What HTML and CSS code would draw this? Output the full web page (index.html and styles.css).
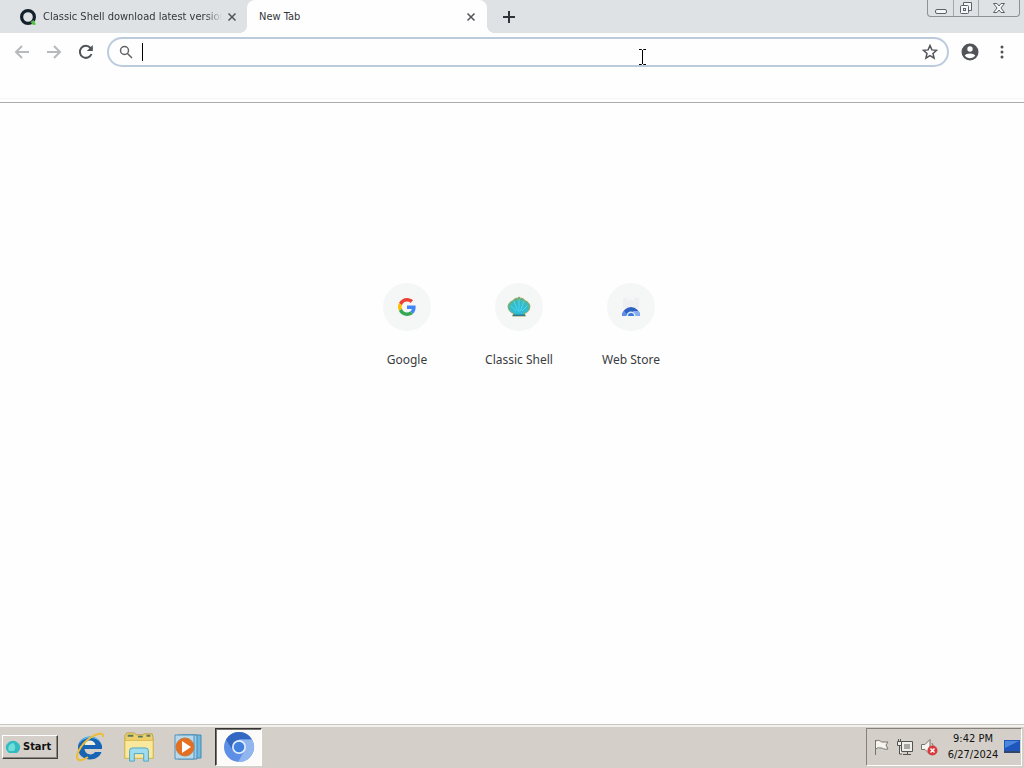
FILE: index.html
```html
<!DOCTYPE html>
<html lang="en">
<head>
<meta charset="utf-8">
<title>New Tab</title>
<link rel="stylesheet" href="styles.css">
</head>
<body>
<header class="tabstrip">
  <div class="tab">
    <svg class="favicon" viewBox="0 0 18 18"><circle cx="9" cy="9" r="6.4" fill="none" stroke="#14202b" stroke-width="3.2"/><path d="M11.5 14l3-2 2.5 4.500-3 .5z" fill="#54c242"/></svg>
    <span class="tab-title faded">Classic Shell download latest version</span>
    <button class="icon-btn close" aria-label="Close tab"><svg viewBox="0 0 10 10"><path d="M1.500 1.500l7 7M8.500 1.500l-7 7"/></svg></button>
  </div>
  <div class="tab active">
    <span class="tab-title">New Tab</span>
    <button class="icon-btn close" aria-label="Close tab"><svg viewBox="0 0 10 10"><path d="M1.500 1.500l7 7M8.500 1.500l-7 7"/></svg></button>
  </div>
  <button class="icon-btn new-tab" aria-label="New tab"><svg viewBox="0 0 12 12"><path d="M6 0v12M0 6h12"/></svg></button>
  <div class="window-controls">
    <button class="icon-btn win" aria-label="Minimize"><svg viewBox="0 0 14 14"><rect x="1.500" y="8.500" width="11" height="4" rx="1.500"/></svg></button>
    <button class="icon-btn win" aria-label="Restore"><svg viewBox="0 0 14 14"><path d="M4.500 4V1.500h8v8H10"/><rect x="1.500" y="4.500" width="8" height="8" rx="1"/><rect x="4.500" y="7.500" width="2" height="2"/></svg></button>
    <button class="icon-btn win win-close" aria-label="Close"><svg viewBox="0 0 14 14"><path d="M1.500 2.500h3.500l2 2.500 2-2.500h3.500L9 7l3.500 4.500H9L7 9l-2 2.500H1.500L5 7z"/></svg></button>
  </div>
</header>
<nav class="toolbar">
  <button class="icon-btn nav muted" aria-label="Back"><svg viewBox="0 0 16 16"><path d="M15 8H2M8 2L2 8l6 6"/></svg></button>
  <button class="icon-btn nav muted" aria-label="Forward"><svg viewBox="0 0 16 16"><path d="M1 8h13M8 2l6 6-6 6"/></svg></button>
  <button class="icon-btn nav" aria-label="Reload"><svg viewBox="0 0 16 16"><path d="M13.500 10A6 6 0 1 1 12.500 4L14 5.500"/><path d="M14.800 1v6H8.800z" fill="#505357" stroke="none"/></svg></button>
  <div class="omnibox">
    <svg class="search" viewBox="0 0 14 14"><circle cx="5.500" cy="5.500" r="4"/><path d="M8.500 8.500L13 13"/></svg>
    <span class="caret"></span>
    <input class="address" type="text" aria-label="Address and search bar">
    <button class="icon-btn star" aria-label="Bookmark this page"><svg viewBox="0 0 16 16"><path d="M8 1.500l1.900 4.400 4.700.4-3.600 3.100 1.100 4.700L8 11.600l-4.100 2.500L5 9.400 1.400 6.300l4.700-.4z"/></svg></button>
  </div>
  <button class="icon-btn profile" aria-label="Profile"><svg viewBox="0 0 18 18"><circle cx="9" cy="9" r="8.500" fill="#505357"/><circle cx="9" cy="6" r="2.700" fill="#fff"/><path d="M3.800 12.500C5 9.800 13 9.800 14.200 12.500 13 14.300 11 15.300 9 15.300s-4-1-5.200-2.800z" fill="#fff"/></svg></button>
  <button class="icon-btn menu" aria-label="Menu"><svg viewBox="0 0 4 14"><circle cx="2" cy="2" r="1.500"/><circle cx="2" cy="7" r="1.500"/><circle cx="2" cy="12" r="1.500"/></svg></button>
</nav>
<div class="bookmarks"></div>
<main class="page">
  <a class="tile" href="#google">
    <span class="disc"><svg viewBox="0 0 48 48"><path fill="#ea4335" d="M24 9.500c3.500 0 6.700 1.200 9.200 3.600l6.900-6.900C35.900 2.400 30.500 0 24 0 14.600 0 6.500 5.400 2.600 13.200l8 6.200C12.400 13.700 17.700 9.500 24 9.500z"/><path fill="#4285f4" d="M47 24.600c0-1.600-.2-3.100-.4-4.600H24v9h12.900c-.6 3-2.200 5.500-4.700 7.200l7.700 6C44.400 38 47 31.800 47 24.600z"/><path fill="#fbbc05" d="M10.500 28.600c-.5-1.500-.8-3-.8-4.600s.3-3.100.8-4.600l-8-6.200C.9 16.500 0 20.100 0 24s.9 7.500 2.600 10.800z"/><path fill="#34a853" d="M24 48c6.500 0 11.900-2.100 15.900-5.800l-7.700-6c-2.200 1.500-4.900 2.300-8.200 2.300-6.300 0-11.600-4.200-13.500-9.900l-8 6.200C6.500 42.600 14.600 48 24 48z"/></svg></span>
    <span class="label">Google</span>
  </a>
  <a class="tile" href="#classic-shell">
    <span class="disc"><svg class="shell" viewBox="0 0 24 22"><defs><radialGradient id="shell-fill" cx=".5" cy=".65" r=".6"><stop offset="0" stop-color="#22bdea"/><stop offset=".7" stop-color="#35bcc4"/><stop offset="1" stop-color="#6fae72"/></radialGradient></defs><path d="M7 17.500C3 17 .8 13 1.200 9.500 2 7 3.500 5.500 5.500 5 7 3 9 2 10.500 2.200L12 1l1.500 1.200C15 2 17 3 18.500 5c2 .5 3.500 2 4.300 4.500.4 3.500-1.800 7.500-5.800 8l1.500 2.500h-13z" fill="url(#shell-fill)" stroke="#8fa45f"/><path d="M12 16V3M10.500 15L7 5M13.500 15L17 5M9 15L3.500 9.500M15 15l5.500-5.500" stroke="#7be0dc" stroke-opacity=".6" fill="none"/><path d="M6 18.500h12V20H6z" fill="#32758c"/></svg></span>
    <span class="label">Classic Shell</span>
  </a>
  <a class="tile" href="#web-store">
    <span class="disc"><svg class="store" viewBox="0 0 20 20"><path d="M2 1h16v10H2z" fill="#eeeff0"/><path d="M7 4V2h6v2" fill="none" stroke="#fafafa"/><path d="M1 19a9 9 0 0 1 18 0z" fill="#2f62c0"/><path d="M1 19a9 9 0 0 1 2-5.500L7 19z" fill="#5b8ee8"/><path d="M12 14h5.800A9 9 0 0 1 19 19h-6z" fill="#87adf0"/><path d="M5.500 19a4.500 4.500 0 0 1 9 0z" fill="#dce8fb"/><path d="M7 19a3 3 0 0 1 6 0z" fill="#3c78dc"/></svg></span>
    <span class="label">Web Store</span>
  </a>
</main>
<footer class="taskbar">
  <button class="start"><svg viewBox="0 0 16 16"><path d="M4 14C0 11 0 6 3 4c3-3 7-3 10 0 3 2 3 7-1 10z" fill="#32bcc2"/><path d="M4 12C2 9 4 5 8 4c2 1 3 5 1 8z" fill="#70ddd8"/></svg>Start</button>
  <button class="task" aria-label="Internet Explorer"><svg viewBox="0 0 32 32"><path d="M28 18H10.500c.5 6 8.500 7 10.500 3h6.500C24 32 4 31 4 17S25 2 28 15z" fill="#1763b4"/><path d="M5 14C8 2 25 3 27.500 14c-2-5-6-7-11-7S7 9 5 14z" fill="#58b7ed"/><path d="M10.500 14c1-6 10-6 11 0z" fill="#f0f0df"/><path d="M5 29C-1 27 7 13 16 7c7-5 14-6 13-1M5 29c3 1 6-1 9-3" fill="none" stroke="#edbd38" stroke-width="2"/></svg></button>
  <button class="task" aria-label="Windows Explorer"><svg viewBox="0 0 34 32"><path d="M2 4l2-3h8l2 2h7l2-1h8l1 4v22H2z" fill="#edcf6d" stroke="#bea14b"/><path d="M5 4h6M16 5h5M25 4h4" stroke="#557a59" stroke-width="2"/><path d="M2 9h30v19H2z" fill="#fae99d" stroke="#d9b950"/><path d="M7 31V20q0-3 3-3h14q3 0 3 3v11h-5v-8H12v8z" fill="#a0dcef" stroke="#4ba3c3"/></svg></button>
  <button class="task" aria-label="Media Player"><svg viewBox="0 0 32 32"><path d="M10 4h19v23H10z" fill="#70b8dd" stroke="#4289b2"/><path d="M6 4h19v24H6z" fill="#9acdea" stroke="#458bb5"/><path d="M3 4h19v24H3z" fill="#b8d9ea" stroke="#5592b8"/><circle cx="13" cy="16" r="9" fill="#e66e20" stroke="#c3793f"/><path d="M10 10l9 6-9 6z" fill="#fff"/></svg></button>
  <button class="task current" aria-label="Chromium"><svg viewBox="0 0 32 32"><circle cx="16" cy="16" r="15" fill="#5c8fe5"/><path d="M3 8.500A15 15 0 0 1 29 8.500H16l-6 11z" fill="#3267c2"/><path d="M16 8.500h13A15 15 0 0 1 15 31l7-12z" fill="#91b5ee"/><circle cx="16" cy="16" r="7" fill="#e3edfc"/><circle cx="16" cy="16" r="5.300" fill="#4280df"/></svg></button>
  <div class="tray">
    <svg class="tray-icon" viewBox="0 0 18 18"><path d="M3.500 17V2M4 3c3-2 5 1 6 1h6l-2 3 2 4c-4 1-5-1-7-1s-3-1-5 1" fill="#f5f4f0" stroke="#77746f"/></svg>
    <svg class="tray-icon" viewBox="0 0 18 18"><path d="M5.500 3.500h11v10h-11zM7 16.500h8M11.500 14v2" fill="#f0eeea" stroke="#55534f"/><path d="M8 6h6v5H8z" fill="#aaa7a1"/><path d="M1.500 3.500h4v4h-4zM2.500 1v2M4.500 1v2M3.500 8v8H6" fill="#eee" stroke="#55534f"/></svg>
    <svg class="tray-icon" viewBox="0 0 18 18"><path d="M1.500 6.500H5l5-5v15l-5-5H1.500zM12 5q2 3 1 6" fill="#f5f4f0" stroke="#77746f"/><circle cx="12.500" cy="12.500" r="5" fill="#d63b3d"/><path d="M10.500 10.500l4 4m0-4l-4 4" stroke="#fff" stroke-width="1.500"/></svg>
    <time class="clock" datetime="2024-06-27T21:42"><span>9:42 PM</span><span>6/27/2024</span></time>
    <svg class="desktop" viewBox="0 0 16 14"><path d="M0 0h16v11H0z" fill="#1e56bd"/><path d="M1 1h14L1 8z" fill="#4b86dd"/><path d="M0 11h16v2H0z" fill="#354469"/></svg>
  </div>
</footer>
<svg class="pointer" viewBox="0 0 9 16"><path d="M1 .5h2.500l1 1 1-1H8M4.500 1v14M1 15.500h2.500l1-1 1 1H8" fill="none" stroke="#000"/></svg>
</body>
</html>
```

FILE: styles.css
```css
* { box-sizing: border-box; }
body {
  margin: 0;
  min-height: 100vh;
  display: flex;
  flex-direction: column;
  background: #fefefe;
  color: #333639;
  font: 12px/16px "DejaVu Sans Condensed", "DejaVu Sans", sans-serif;
}
svg { display: block; flex: none; }
button { font: inherit; color: inherit; }
.icon-btn {
  display: flex;
  align-items: center;
  justify-content: center;
  flex: none;
  padding: 0;
  border: 0;
  background: none;
}
.icon-btn svg { fill: none; stroke: #505357; }

.tabstrip {
  display: flex;
  height: 33px;
  padding-left: 8px;
  background: #dee2e5;
}
.tab {
  display: flex;
  align-items: center;
  flex: 0 1 240px;
  min-width: 0;
  padding: 0 10px 0 12px;
}
.tab:first-child { flex-basis: 239px; padding: 0 9px 0 11px; }
.tab.active {
  position: relative;
  background: #fefefe;
  border-radius: 8px 8px 0 0;
}
.tab.active::before,
.tab.active::after {
  content: "";
  position: absolute;
  bottom: 0;
  width: 8px;
  height: 8px;
}
.tab.active::before { right: 100%; background: radial-gradient(circle at 0 0, transparent 8px, #fefefe 8px); }
.tab.active::after { left: 100%; background: radial-gradient(circle at 100% 0, transparent 8px, #fefefe 8px); }
.favicon { width: 18px; height: 18px; margin-right: 6px; }
.tab-title {
  flex: 1;
  min-width: 0;
  overflow: hidden;
  white-space: nowrap;
  font-size: 11px;
  line-height: 18px;
}
.faded {
  -webkit-mask-image: linear-gradient(to left, transparent, #000 16px);
  mask-image: linear-gradient(to left, transparent, #000 16px);
}
.close { width: 12px; height: 16px; margin-left: 4px; }
.close svg { width: 10px; height: 10px; stroke-width: 1.5; }
.new-tab { width: 28px; margin-left: 8px; }
.new-tab svg { width: 12px; height: 12px; stroke: #303338; stroke-width: 2; }
.window-controls {
  display: flex;
  height: 17px;
  margin: 0 4px 0 auto;
  border: 1px solid #8b9195;
  border-top: 0;
  border-radius: 0 0 4px 4px;
}
.win { width: 25px; }
.win + .win { border-left: 1px solid #a1a7ab; }
.win.win-close { width: 41px; }
.win svg { width: 14px; height: 14px; fill: #f4f6f7; stroke: #5c6268; }

.toolbar {
  display: flex;
  align-items: center;
  height: 38px;
  padding: 0 12px 0 14px;
}
.nav { width: 16px; height: 28px; margin-right: 16px; }
.nav svg { width: 16px; height: 16px; stroke-width: 2; }
.nav.muted svg { stroke: #b7b9bb; }
.nav + .omnibox { margin-left: -3px; }
.omnibox {
  display: flex;
  align-items: center;
  flex: 1;
  min-width: 0;
  height: 30px;
  padding: 0 9px 0 10px;
  border: 2px solid #bccbdc;
  border-radius: 15px;
}
.search { width: 14px; height: 14px; fill: none; stroke: #606367; stroke-width: 1.5; }
.caret { width: 1px; height: 18px; margin-left: 9px; background: #000; }
.address {
  flex: 1;
  min-width: 0;
  border: 0;
  padding: 0;
  outline: 0;
  background: none;
  font: inherit;
}
.star svg { width: 16px; height: 16px; stroke-width: 1.5; }
.profile { margin-left: 12px; }
.profile svg { width: 18px; height: 18px; stroke: none; }
.menu { width: 20px; height: 28px; margin-left: 13px; }
.menu svg { width: 4px; height: 14px; fill: #505357; stroke: none; }
.bookmarks {
  height: 32px;
  border-bottom: 1px solid #adabab;
  box-shadow: inset 0 -3px 0 #fefefe, inset 0 -4px 0 #f5f5f5;
}

.page {
  display: flex;
  flex: 1;
  justify-content: center;
  align-items: flex-start;
  padding: 180px 0 40px 14px;
}
.tile {
  display: flex;
  flex-direction: column;
  align-items: center;
  width: 112px;
  gap: 21px;
  color: #3a3c3f;
  text-decoration: none;
  font: 12px/16px "Noto Sans", "Open Sans", sans-serif;
}
.disc {
  display: flex;
  align-items: center;
  justify-content: center;
  width: 48px;
  height: 48px;
  border-radius: 50%;
  background: #f5f6f6;
}
.disc svg { width: 18px; height: 18px; }
.disc .shell { width: 24px; height: 22px; }
.disc .store { width: 20px; height: 20px; }

.taskbar {
  display: flex;
  align-items: center;
  height: 44px;
  padding: 2px 2px 2px;
  border-top: 1px solid #c9c6c1;
  box-shadow: inset 0 2px 0 #f4f2ef;
  background: #d4d0c9;
  color: #111;
}
.start {
  display: flex;
  align-items: center;
  gap: 2px;
  height: 24px;
  width: 56px;
  margin-right: 8px;
  padding: 0 0 0 2px;
  border: 1px solid;
  border-color: #fff #45423e #45423e #fff;
  box-shadow: inset -1px -1px 0 #8b8782;
  background: #d4d0c9;
  font-weight: bold;
  font-size: 11px;
}
.start svg { width: 16px; height: 16px; }
.task {
  display: flex;
  align-items: center;
  justify-content: center;
  width: 47px;
  height: 38px;
  margin-right: 2px;
  padding: 0;
  border: 1px solid transparent;
  background: none;
}
.task svg { width: 32px; height: 32px; }
.task.current {
  margin-left: 2px;
  border: 1px solid;
  border-color: #333 #fff #fff #333;
  box-shadow: inset 1px 1px 0 #77736f;
  background: #fcfbfa;
}
.tray {
  display: flex;
  align-items: center;
  height: 38px;
  margin-left: auto;
  padding: 0 1px 0 5px;
  border: 1px solid;
  border-color: #85817c #fff #fff #85817c;
}
.tray-icon { width: 18px; height: 18px; fill: none; margin-right: 6px; }
.clock {
  display: flex;
  flex-direction: column;
  align-items: center;
  width: 58px;
  font-size: 11px;
  margin-right: 2px;
  white-space: nowrap;
}
.desktop { width: 16px; height: 14px; }
.pointer {
  position: absolute;
  left: 638px;
  top: 49px;
  width: 9px;
  height: 16px;
}
```
